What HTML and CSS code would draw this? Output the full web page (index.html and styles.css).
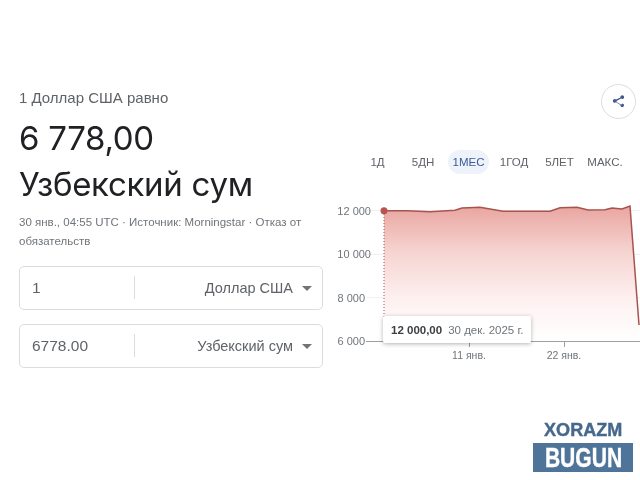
FILE: index.html
```html
<!DOCTYPE html>
<html lang="ru">
<head>
  <meta charset="UTF-8">
  <meta name="viewport" content="width=device-width, initial-scale=1.0">
  <title>Доллар США к узбекскому суму</title>
  <link rel="stylesheet" href="styles.css">
</head>
<body>

  <div class="container">
    <div class="converter">
      <p class="equals">1 Доллар США равно</p>
      <h1 class="result">6 778,00<br>Узбекский сум</h1>
      <p class="source">30 янв., 04:55 UTC · Источник: Morningstar · Отказ от обязательств</p>

      <div class="field">
        <span class="amount">1</span>
        <span class="currency">Доллар США</span>
        <span class="caret"></span>
      </div>
      <div class="field">
        <span class="amount">6778.00</span>
        <span class="currency">Узбекский сум</span>
        <span class="caret"></span>
      </div>
    </div>

    <div class="graph">
      <div class="share">
        <svg width="15" height="15" viewBox="0 0 24 24">
          <path class="share-icon" d="M18 16.1c-.8 0-1.400.3-2 .8l-7.100-4.200c.1-.2.1-.5.1-.7s0-.5-.1-.7L16 7.200c.5.5 1.200.8 2 .8 1.700 0 3-1.300 3-3s-1.300-3-3-3-3 1.300-3 3c0 .2 0 .5.1.7L8 8.800C7.500 8.300 6.800 8 6 8c-1.700 0-3 1.300-3 3s1.300 3 3 3c.8 0 1.500-.3 2-.8l7.100 4.200c-.1.2-.1.4-.1.6 0 1.600 1.300 2.900 2.900 2.900s2.900-1.300 2.900-2.900-1.200-2.900-2.800-2.900z"/>
        </svg>
      </div>

      <div class="ranges">
        <span class="range">1Д</span>
        <span class="range">5ДН</span>
        <span class="range active">1МЕС</span>
        <span class="range">1ГОД</span>
        <span class="range">5ЛЕТ</span>
        <span class="range">МАКС.</span>
      </div>

      <div class="chart">
        <!-- viewBox starts at the page coords of the chart corner -->
        <svg class="chart-svg" width="304" height="172" viewBox="336 192 304 172">
          <defs>
            <linearGradient id="fade" x1="0" y1="0" x2="0" y2="1">
              <stop offset="0" stop-color="#e9a5a0"/>
              <stop offset="0.35" stop-color="#f6d5d2"/>
              <stop offset="0.7" stop-color="#fdf1f0"/>
              <stop offset="1" stop-color="#ffffff"/>
            </linearGradient>
          </defs>

          <line class="grid" x1="366" y1="210.500" x2="640" y2="210.500"/>
          <line class="grid" x1="366" y1="254.500" x2="640" y2="254.500"/>
          <line class="grid" x1="366" y1="297.500" x2="640" y2="297.500"/>
          <line class="axis" x1="366" y1="341.500" x2="640" y2="341.500"/>
          <line class="axis" x1="469.500" y1="341" x2="469.500" y2="347"/>
          <line class="axis" x1="564.500" y1="341" x2="564.500" y2="347"/>

          <path fill="url(#fade)" d="M384 210.700 L407 210.700 L430 211.700 L455 210.300 L462 208 L480 207.300 L503 211.300 L540 211.300 L550 211.300 L560 207.700 L577 207.300 L588 210 L605 209.700 L612 208 L622 209 L630 206 L639 325 L640 341 L384 341 Z"/>
          <path class="line" d="M384 210.700 L407 210.700 L430 211.700 L455 210.300 L462 208 L480 207.300 L503 211.300 L540 211.300 L550 211.300 L560 207.700 L577 207.300 L588 210 L605 209.700 L612 208 L622 209 L630 206 L639 325"/>
          <line class="hover-line" x1="384" y1="211" x2="384" y2="318"/>
          <circle class="dot" cx="384" cy="210.700" r="3.500"/>

          <text class="label" x="371" y="214.500" text-anchor="end">12 000</text>
          <text class="label" x="371" y="258" text-anchor="end">10 000</text>
          <text class="label" x="365" y="302" text-anchor="end">8 000</text>
          <text class="label" x="365" y="345" text-anchor="end">6 000</text>
          <text class="label small" x="469" y="359" text-anchor="middle">11 янв.</text>
          <text class="label small" x="564" y="359" text-anchor="middle">22 янв.</text>
        </svg>
        <div class="tooltip"><strong>12 000,00</strong><span>30 дек. 2025 г.</span></div>
      </div>
    </div>
  </div>

  <div class="logo">
    <div class="logo-top"><span>XORAZM</span></div>
    <div class="logo-bottom"><span>BUGUN</span></div>
  </div>

</body>
</html>
```

FILE: styles.css
```css
body {
  font-family: "Liberation Sans", Arial, sans-serif;
  margin: 0;
  padding: 0;
  background-color: #fff;
  color: #3c4043;
}

/* the screenshot is a soft jpeg */
.container, .logo {
  filter: blur(0.35px);
}

.container {
  display: flex;
  width: 640px;
  height: 480px;
  overflow: hidden;
}

.converter {
  width: 304px;
  margin-left: 19px;
  padding-top: 89px;
  flex-shrink: 0;
}

.equals {
  margin: 0;
  font-size: 15px;
  line-height: 18px;
  color: #5f6368;
}

.result {
  margin: 8px 0 0;
  font-family: Inter, sans-serif;
  font-size: 33px;
  font-weight: 400;
  letter-spacing: -0.3px;
  line-height: 46px;
  color: #202124;
}

.source {
  margin: 6px 0 15px;
  font-size: 11.500px;
  line-height: 19px;
  color: #70757a;
}

.field {
  display: flex;
  align-items: center;
  height: 41px;
  padding-bottom: 1px;
  margin-bottom: 14px;
  border: 1px solid #dadce0;
  border-radius: 5px;
  font-size: 15.500px;
}

.amount {
  width: 102px;
  padding-left: 12px;
  height: 23px;
  line-height: 23px;
  border-right: 1px solid #dadce0;
  color: #5f6368;
}

.currency {
  flex: 1;
  text-align: right;
  font-size: 14.500px;
  color: #5f6368;
}

.caret {
  width: 0;
  height: 0;
  margin: 1px 10px 0 9px;
  border-left: 5px solid transparent;
  border-right: 5px solid transparent;
  border-top: 5px solid #70757a;
}

.graph {
  flex: 1;
  min-width: 0;
}

.share {
  display: flex;
  align-items: center;
  justify-content: center;
  width: 33px;
  height: 33px;
  margin: 84px 4px 0 auto;
  border: 1px solid #dadce0;
  border-radius: 50%;
}

.share-icon {
  fill: #41598b;
}

.ranges {
  display: flex;
  gap: 4.500px;
  margin: 31px 0 0 34px;
}

.range {
  width: 41px;
  height: 24px;
  line-height: 24px;
  text-align: center;
  font-size: 11.500px;
  white-space: nowrap;
  color: #5f6368;
  border-radius: 12px;
}

.range.active {
  background-color: #edf2fb;
  color: #3d5a96;
}

.chart {
  position: relative;
  margin: 18px 0 0 13px;
}

.chart-svg {
  display: block;
}

.grid {
  stroke: #f1f1f1;
  stroke-width: 1;
}

.axis {
  stroke: #9aa0a6;
  stroke-width: 1;
}

.line {
  fill: none;
  stroke: #a9534e;
  stroke-width: 1.500;
}

.hover-line {
  stroke: #a9534e;
  stroke-width: 1;
  stroke-dasharray: 1 2;
}

.dot {
  fill: #b9534e;
}

.label {
  font-size: 11px;
  fill: #70757a;
}

.label.small {
  font-size: 10.500px;
}

/* sits over the chart */
.tooltip {
  position: absolute;
  left: 47px;
  top: 124px;
  display: flex;
  gap: 6px;
  align-items: center;
  height: 27px;
  padding: 0 8px;
  background-color: #fff;
  border-radius: 2px;
  box-shadow: 0px 1px 4px rgba(0, 0, 0, 0.3);
  font-size: 11.500px;
  white-space: nowrap;
  color: #70757a;
}

.tooltip strong {
  color: #3c4043;
}

/* watermark over the page corner */
.logo {
  position: absolute;
  left: 533px;
  top: 419px;
  width: 100px;
  text-align: center;
  font-weight: bold;
}

.logo span {
  display: inline-block;
  -webkit-text-stroke: 0.4px;
}

.logo-top {
  height: 24px;
  line-height: 21px;
  font-size: 19px;
  color: #46688c;
}

.logo-top span {
  transform: scaleX(0.95);
}

.logo-bottom {
  height: 29px;
  line-height: 30px;
  font-size: 27px;
  background-color: #4f7499;
  color: #fff;
}

.logo-bottom span {
  transform: scaleX(0.78);
}
```
